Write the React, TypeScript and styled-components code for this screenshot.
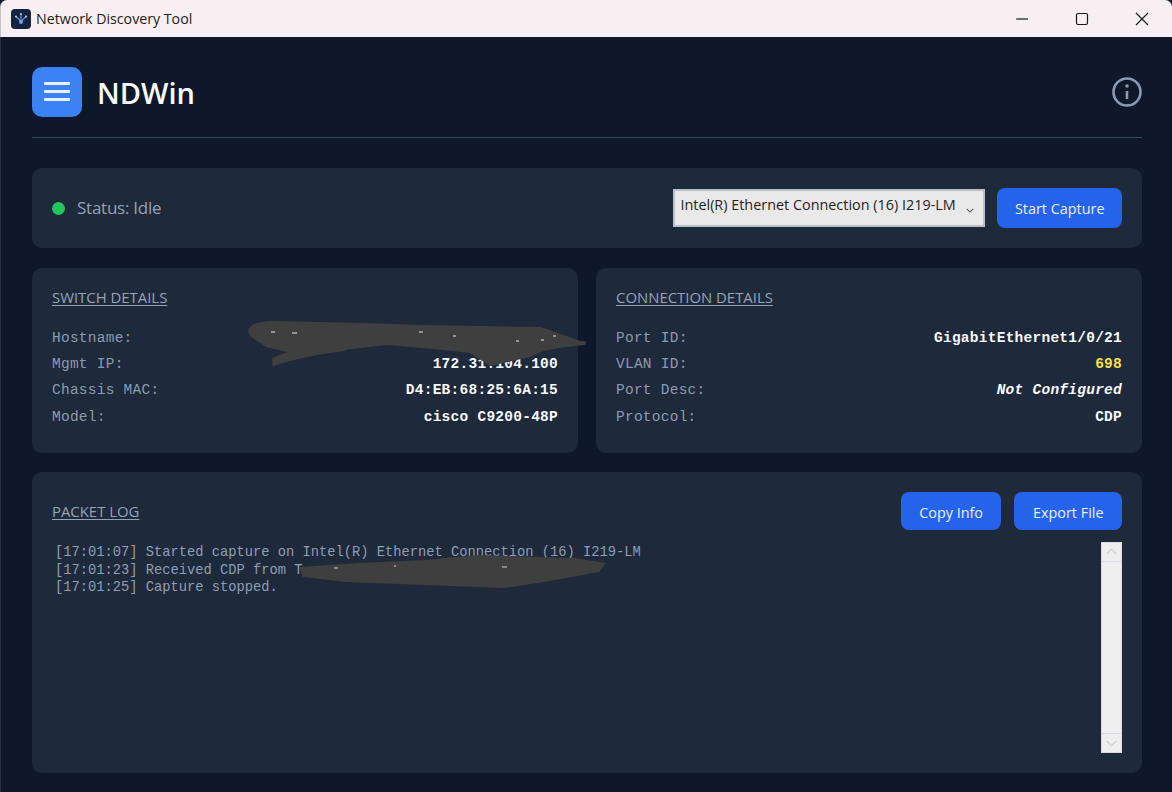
import React from 'react'
import styled, { createGlobalStyle } from 'styled-components'

const UI_FONT = '"Open Sans", "Noto Sans", sans-serif'
const MONO_FONT = '"Liberation Mono", "DejaVu Sans Mono", monospace'

const GlobalStyle = createGlobalStyle`
  html, body {
    margin: 0;
    padding: 0;
    background: #0f172a;
    overflow: hidden;
  }
  * {
    box-sizing: border-box;
  }
`

const switchRows = [
  { label: 'Hostname:', value: '' },
  { label: 'Mgmt IP:', value: '172.31.104.100' },
  { label: 'Chassis MAC:', value: 'D4:EB:68:25:6A:15' },
  { label: 'Model:', value: 'cisco C9200-48P' },
]

const connectionRows = [
  { label: 'Port ID:', value: 'GigabitEthernet1/0/21' },
  { label: 'VLAN ID:', value: '698', tone: 'vlan' },
  { label: 'Port Desc:', value: 'Not Configured', tone: 'muted' },
  { label: 'Protocol:', value: 'CDP' },
]

const logLines = [
  '[17:01:07] Started capture on Intel(R) Ethernet Connection (16) I219-LM',
  '[17:01:23] Received CDP from T',
  '[17:01:25] Capture stopped.',
]

export default function App() {
  return (
    <Window>
      <GlobalStyle />
      <TitleBar>
        <AppIcon viewBox="0 0 20 20" aria-hidden="true">
          <rect width="20" height="20" rx="4" fill="#14233f" />
          <path
            d="M10 12.5V5M10 12.5L5 7.5M10 12.5L15 7.5"
            stroke="#6f8fd0"
            strokeWidth="1.2"
            fill="none"
          />
          <circle cx="10" cy="13" r="2" fill="#7c9be0" />
          <circle cx="10" cy="5" r="1" fill="#c4d2ee" />
          <circle cx="5" cy="7.5" r="1" fill="#c4d2ee" />
          <circle cx="15" cy="7.5" r="1" fill="#c4d2ee" />
        </AppIcon>
        <WindowTitle>Network Discovery Tool</WindowTitle>
        <WindowButtons>
          <WindowButton viewBox="0 0 14 14" aria-hidden="true">
            <path d="M1 7H13" />
          </WindowButton>
          <WindowButton viewBox="0 0 14 14" aria-hidden="true">
            <rect x="1.5" y="1.5" width="11" height="11" rx="1.5" />
          </WindowButton>
          <WindowButton viewBox="0 0 14 14" aria-hidden="true">
            <path d="M1 1L13 13M13 1L1 13" />
          </WindowButton>
        </WindowButtons>
      </TitleBar>

      <Content>
        <Header>
          <Brand>
            <MenuBadge>
              <MenuBar />
              <MenuBar />
              <MenuBar />
            </MenuBadge>
            <BrandName>NDWin</BrandName>
          </Brand>
          <InfoIcon viewBox="0 0 32 32" aria-hidden="true">
            <circle cx="16" cy="16" r="13.5" />
            <path d="M16 15V23" />
            <circle className="dot" cx="16" cy="10" r="1.8" />
          </InfoIcon>
        </Header>

        <StatusCard>
          <StatusGroup>
            <StatusDot />
            <StatusText>Status: Idle</StatusText>
          </StatusGroup>
          <Controls>
            <AdapterSelect>
              <span>Intel(R) Ethernet Connection (16) I219-LM</span>
              <Chevron viewBox="0 0 10 6" aria-hidden="true">
                <path d="M1 1L5 5L9 1" />
              </Chevron>
            </AdapterSelect>
            <ActionButton $tall>Start Capture</ActionButton>
          </Controls>
        </StatusCard>

        <DetailsGrid>
          <DetailCard>
            <SectionTitle>SWITCH DETAILS</SectionTitle>
            <DetailRows>
              {switchRows.map((row) => (
                <DetailRow key={row.label}>
                  <DetailLabel>{row.label}</DetailLabel>
                  <DetailValue>{row.value}</DetailValue>
                </DetailRow>
              ))}
            </DetailRows>
            {/* viewBox is in page coordinates, so the scribble is traced straight off the screenshot */}
            <HostScribble viewBox="246 318 342 50" aria-hidden="true">
              <path d="M248 331C250 324 258 321 275 321L362 323L423 325L541 327L586 343L558 345L530 357L490 366L470 353L433 349L387 345L344 350L287 360L273 366L272 358L287 352L266 347L251 337Z" />
              <path className="scrawl" d="M252 332C255 324 275 323 300 324M274 364C290 358 320 352 344 349M490 364C515 356 545 346 584 343" />
              <path className="speck" d="M271 332H275M292 333H297M419 332H423M453 336H456M516 341H519M541 340H544M553 336H556" />
            </HostScribble>
          </DetailCard>

          <DetailCard>
            <SectionTitle>CONNECTION DETAILS</SectionTitle>
            <DetailRows>
              {connectionRows.map((row) => (
                <DetailRow key={row.label}>
                  <DetailLabel>{row.label}</DetailLabel>
                  <DetailValue $tone={row.tone}>{row.value}</DetailValue>
                </DetailRow>
              ))}
            </DetailRows>
          </DetailCard>
        </DetailsGrid>

        <LogCard>
          <LogHeader>
            <SectionTitle>PACKET LOG</SectionTitle>
            <LogActions>
              <ActionButton>Copy Info</ActionButton>
              <ActionButton>Export File</ActionButton>
            </LogActions>
          </LogHeader>
          <LogBody>
            <LogText>
              {logLines.map((line) => (
                <div key={line}>{line}</div>
              ))}
              <LogScribble viewBox="296 553 312 36" aria-hidden="true">
                <path d="M299 567L360 563L425 560L477 555L575 558L606 563L599 572L544 582L504 588L425 585L346 582L303 577Z" />
                <path className="speck" d="M334 568H338M394 566H396M502 567H507" />
              </LogScribble>
            </LogText>
            <Scrollbar>
              <ScrollArrow viewBox="0 0 20 18" aria-hidden="true">
                <path d="M5 11L10 6L15 11" />
              </ScrollArrow>
              <ScrollTrack />
              <ScrollArrow viewBox="0 0 20 18" aria-hidden="true">
                <path d="M5 7L10 12L15 7" />
              </ScrollArrow>
            </Scrollbar>
          </LogBody>
        </LogCard>
      </Content>
    </Window>
  )
}

const Window = styled.div`
  display: flex;
  flex-direction: column;
  width: 1172px;
  height: 792px;
  background: #0f172a;
  font-family: ${UI_FONT};
  overflow: hidden;
`

const TitleBar = styled.div`
  display: flex;
  align-items: center;
  flex: 0 0 37px;
  padding-left: 10px;
  background: #f7eff1;
  border-left: 1px solid #c9c5c7;
  border-top-left-radius: 7px;
  border-top-right-radius: 7px;
`

const AppIcon = styled.svg`
  width: 20px;
  height: 20px;
  margin-right: 5px;
`

const WindowTitle = styled.span`
  flex: 1;
  font-size: 14.2px;
  color: #1c1c1c;
`

const WindowButtons = styled.div`
  display: flex;
  align-items: center;
  gap: 46px;
  padding-right: 23px;
`

const WindowButton = styled.svg`
  width: 14px;
  height: 14px;
  fill: none;
  stroke: #1a1a1a;
  stroke-width: 1.2;
`

const Content = styled.div`
  display: flex;
  flex-direction: column;
  flex: 1;
  min-height: 0;
  padding: 30px 30px 19px 32px;
  border-left: 1px solid #2b3240;
`

const Header = styled.header`
  display: flex;
  align-items: center;
  justify-content: space-between;
  height: 71px;
  padding-bottom: 21px;
  margin-left: -1px;
  border-bottom: 1px solid #32475a;
`

const Brand = styled.div`
  display: flex;
  align-items: center;
  gap: 15px;
`

const MenuBadge = styled.div`
  display: flex;
  flex-direction: column;
  align-items: center;
  justify-content: center;
  gap: 5px;
  width: 50px;
  height: 50px;
  border-radius: 10px;
  background: #3b82f6;
`

const MenuBar = styled.span`
  width: 26px;
  height: 3px;
  border-radius: 1px;
  background: #e6f0ff;
`

const BrandName = styled.h1`
  margin: 2px 0 0;
  font-size: 29px;
  font-weight: 600;
  color: #f8fafc;
`

const InfoIcon = styled.svg`
  width: 32px;
  height: 32px;
  margin-right: -1px;
  fill: none;
  stroke: #8a9ab2;
  stroke-width: 2.6;

  .dot {
    fill: #8a9ab2;
    stroke: none;
  }
`

const Card = styled.section`
  background: #1e293b;
  border-radius: 10px;
`

const StatusCard = styled(Card)`
  display: flex;
  align-items: center;
  justify-content: space-between;
  height: 80px;
  margin: 30px 0 20px -1px;
  padding: 0 20px;
`

const StatusGroup = styled.div`
  display: flex;
  align-items: center;
  gap: 12px;
`

const StatusDot = styled.span`
  width: 13px;
  height: 13px;
  border-radius: 50%;
  background: #22c55e;
`

const StatusText = styled.span`
  padding-bottom: 2px;
  font-size: 17px;
  letter-spacing: -0.25px;
  color: #94a3b8;
`

const Controls = styled.div`
  display: flex;
  align-items: center;
  gap: 12px;
`

const AdapterSelect = styled.div`
  display: flex;
  align-items: center;
  justify-content: space-between;
  width: 312px;
  height: 38px;
  padding: 0 9px 8px 5px;
  background: #e9e9e9;
  border: 2px solid #bcc0c9;
  font-size: 14.4px;
  color: #1f1f1f;
  white-space: nowrap;
`

const Chevron = styled.svg`
  width: 8px;
  height: 5px;
  margin-top: 12px;
  fill: none;
  stroke: #555;
  stroke-width: 1.3;
`

const ActionButton = styled.button<{ $tall?: boolean }>`
  height: ${(p) => (p.$tall ? '40px' : '38px')};
  padding: ${(p) => (p.$tall ? '0 17.5px' : '2px 18.5px 0')};
  border: 0;
  border-radius: 8px;
  background: #2563eb;
  font-family: ${UI_FONT};
  font-size: 14.4px;
  color: #e8f0ff;
`

const DetailsGrid = styled.div`
  display: grid;
  grid-template-columns: 546px 546px;
  gap: 18px;
  margin: 0 0 19px -1px;
`

const DetailCard = styled(Card)`
  position: relative;
  height: 185px;
  padding: 19px 20px;
`

const SectionTitle = styled.h2`
  margin: 0;
  font-size: 14.9px;
  font-weight: 400;
  line-height: 20px;
  color: #94a3b8;
  text-decoration: underline;
  text-underline-offset: 2px;
`

const DetailRows = styled.div`
  display: flex;
  flex-direction: column;
  margin-top: 17.5px;
`

const DetailRow = styled.div`
  display: flex;
  justify-content: space-between;
  align-items: center;
  height: 26.4px;
  font-family: ${MONO_FONT};
  font-size: 14.5px;
  letter-spacing: 0.25px;
`

const DetailLabel = styled.span`
  color: #8b9ab0;
`

const DetailValue = styled.span<{ $tone?: string }>`
  font-weight: 700;
  font-style: ${(p) => (p.$tone === 'muted' ? 'italic' : 'normal')};
  color: ${(p) => (p.$tone === 'vlan' ? '#fde047' : '#f8fafc')};
`

const HostScribble = styled.svg`
  position: absolute;
  left: 214px;
  top: 50px;
  width: 342px;
  height: 50px;
  fill: #403f40;

  .scrawl {
    fill: none;
    stroke: #403f40;
    stroke-width: 4;
    stroke-linecap: round;
  }

  .speck {
    fill: none;
    stroke: #e8e8e8;
    stroke-width: 1;
  }
`

const LogCard = styled(Card)`
  display: flex;
  flex-direction: column;
  flex: 1;
  min-height: 0;
  margin-left: -1px;
  padding: 20px;
`

const LogHeader = styled.div`
  display: flex;
  align-items: center;
  justify-content: space-between;
  height: 38px;
`

const LogActions = styled.div`
  display: flex;
  gap: 13px;
`

const LogBody = styled.div`
  display: flex;
  flex: 1;
  min-height: 0;
  margin-top: 12px;
`

const LogText = styled.div`
  position: relative;
  flex: 1;
  padding: 2px 3px;
  font-family: ${MONO_FONT};
  font-size: 13.75px;
  line-height: 17.5px;
  color: #8f9eb4;
  white-space: pre;
`

const LogScribble = styled.svg`
  position: absolute;
  left: 244px;
  top: 11px;
  width: 312px;
  height: 36px;
  fill: #403f40;

  .speck {
    fill: none;
    stroke: #cfd3da;
    stroke-width: 1;
  }
`

const Scrollbar = styled.div`
  display: flex;
  flex-direction: column;
  width: 21px;
  height: 211px;
  background: #efefef;
  border: 1px solid #d8dbe3;
`

const ScrollTrack = styled.div`
  flex: 1;
  border-top: 1px solid #d8dbe3;
  border-bottom: 1px solid #d8dbe3;
`

const ScrollArrow = styled.svg`
  flex: 0 0 18px;
  width: 19px;
  fill: none;
  stroke: #cfd1d6;
  stroke-width: 1.5;
`
